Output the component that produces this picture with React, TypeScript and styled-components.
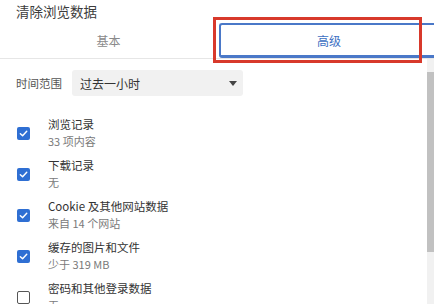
import React from "react";
import styled, { createGlobalStyle } from "styled-components";

const Global = createGlobalStyle`
  html, body { margin: 0; padding: 0; background: #ffffff; }
  body { font-family: "Noto Sans CJK SC", "Noto Sans", sans-serif; }
  * { box-sizing: border-box; }
`;

const Dialog = styled.div`
  position: relative;
  width: 434px;
  height: 304px;
  overflow: hidden;
  background: #fff;
`;

const Title = styled.div`
  height: 23px;
  padding: 2px 0 0 16px;
  font-size: 13.5px;
  line-height: 18px;
  color: #3c3c3c;
`;

const TabBar = styled.div`
  display: flex;
  height: 36px;
  border-bottom: 1px solid #e6e6e6;
`;

const Tab = styled.div<{ $active?: boolean }>`
  display: flex;
  align-items: center;
  justify-content: center;
  font-size: 12px;
  color: ${(p) => (p.$active ? "#3d6fc2" : "#8a8a8a")};
  ${(p) =>
    p.$active
      ? `
    flex: 0 0 230px;
    margin-left: 2px;
    height: 35px;
    border: 2px solid #4a78c8;
    border-bottom-width: 3px;
    border-right: none;
    border-radius: 3px 0 0 3px;
    padding-right: 12px;
  `
      : `
    flex: 0 0 217px;
    padding-bottom: 1px;
  `}
`;

const Highlight = styled.div`
  position: absolute;
  left: 213px;
  top: 17px;
  width: 209px;
  height: 46px;
  border: 3px solid #d8392b;
  pointer-events: none;
`;

const Body = styled.div`
  display: flex;
  height: 245px;
`;

const Content = styled.div`
  flex: 1;
  padding: 11px 0 0 16px;
`;

const RangeRow = styled.div`
  display: flex;
  align-items: center;
  height: 26px;
  margin-bottom: 20px;
`;

const RangeLabel = styled.div`
  width: 56px;
  font-size: 11.5px;
  color: #555;
`;

const Select = styled.div`
  display: flex;
  align-items: center;
  justify-content: space-between;
  width: 171px;
  height: 26px;
  padding: 0 6px 0 8px;
  background: #f1f1f1;
  border-radius: 3px;
  font-size: 12px;
  color: #333;
`;

const Caret = styled.span`
  width: 0;
  height: 0;
  border-left: 4px solid transparent;
  border-right: 4px solid transparent;
  border-top: 5px solid #444;
`;

const List = styled.div`
  display: flex;
  flex-direction: column;
  gap: 7px;
`;

const Item = styled.div`
  display: flex;
  align-items: center;
`;

const Box = styled.span<{ $checked: boolean }>`
  flex: 0 0 13px;
  width: 13px;
  height: 13px;
  margin: 0 18px 0 1px;
  border-radius: 2px;
  display: flex;
  align-items: center;
  justify-content: center;
  background: ${(p) => (p.$checked ? "#2f6fd3" : "#fff")};
  border: ${(p) => (p.$checked ? "none" : "1.5px solid #555")};
`;

const Texts = styled.div`
  display: flex;
  flex-direction: column;
`;

const Label = styled.div`
  font-size: 11.5px;
  line-height: 17px;
  color: #333;
`;

const Sub = styled.div`
  font-size: 11px;
  line-height: 17px;
  color: #7a7a7a;
`;

const Scrollbar = styled.div`
  flex: 0 0 7px;
  display: flex;
  flex-direction: column;
  background: #f1f1f1;
  padding-top: 13px;
`;

const Thumb = styled.div`
  height: 180px;
  background: #c1c1c1;
`;

const Check = () => (
  <svg width="9" height="9" viewBox="0 0 10 10">
    <path d="M1.5 5.2 L4 7.6 L8.6 2.6" fill="none" stroke="#fff" strokeWidth="1.6" strokeLinecap="round" strokeLinejoin="round" />
  </svg>
);

const items = [
  { label: "浏览记录", sub: "33 项内容", checked: true },
  { label: "下载记录", sub: "无", checked: true },
  { label: "Cookie 及其他网站数据", sub: "来自 14 个网站", checked: true },
  { label: "缓存的图片和文件", sub: "少于 319 MB", checked: true },
  { label: "密码和其他登录数据", sub: "无", checked: false },
];

export default function App() {
  return (
    <>
      <Global />
      <Dialog>
        <Title>清除浏览数据</Title>
        <TabBar>
          <Tab>基本</Tab>
          <Tab $active>高级</Tab>
        </TabBar>
        <Body>
          <Content>
            <RangeRow>
              <RangeLabel>时间范围</RangeLabel>
              <Select>
                <span>过去一小时</span>
                <Caret />
              </Select>
            </RangeRow>
            <List>
              {items.map((it) => (
                <Item key={it.label}>
                  <Box $checked={it.checked}>{it.checked && <Check />}</Box>
                  <Texts>
                    <Label>{it.label}</Label>
                    <Sub>{it.sub}</Sub>
                  </Texts>
                </Item>
              ))}
            </List>
          </Content>
          <Scrollbar>
            <Thumb />
          </Scrollbar>
        </Body>
        <Highlight />
      </Dialog>
    </>
  );
}
